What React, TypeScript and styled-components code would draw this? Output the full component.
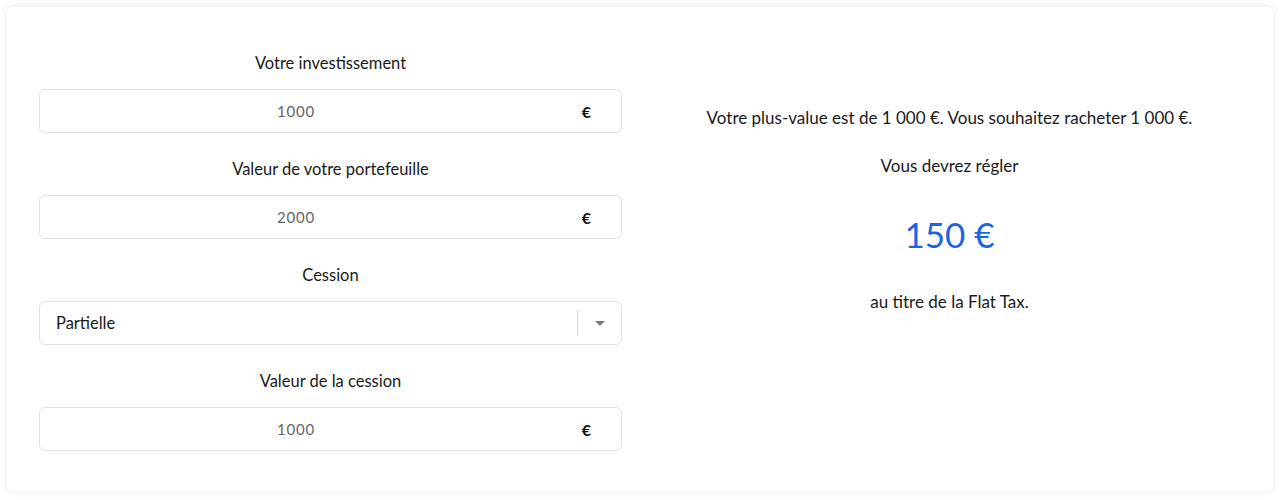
import React from 'react';
import styled, { createGlobalStyle } from 'styled-components';

const GlobalStyle = createGlobalStyle`
  body {
    margin: 0;
    background: #ffffff;
    font-family: Lato, "Liberation Sans", sans-serif;
    color: #1a1a1a;
  }
`;

const Page = styled.div`
  padding: 7px 9px 9px 7px;
`;

const Card = styled.div`
  display: grid;
  grid-template-columns: 1fr 1fr;
  column-gap: 36px;
  padding: 44px 32px 40px;
  background: #fff;
  border-radius: 6px;
  box-shadow: 0 0 8px rgba(0, 0, 0, 0.1);
`;

const Form = styled.div`
  display: flex;
  flex-direction: column;
  gap: 24px;
`;

const Field = styled.div`
  display: flex;
  flex-direction: column;
  gap: 14px;
`;

const Label = styled.label`
  text-align: center;
  font-size: 16.5px;
  line-height: 24px;
`;

const Box = styled.div`
  display: flex;
  align-items: center;
  height: 44px;
  box-sizing: border-box;
  border: 1px solid #e2e2e2;
  border-radius: 6px;
  background: #fff;
`;

const NumberInput = styled.input`
  flex: 1;
  min-width: 0;
  border: none;
  outline: none;
  background: transparent;
  text-align: center;
  font-family: inherit;
  font-size: 15px;
  letter-spacing: 0.8px;
  color: #666;
  padding: 0;
`;

const Addon = styled.span`
  width: 69px;
  text-align: center;
  font-weight: 700;
  font-size: 16px;
  color: #111;
`;

const SelectValue = styled.span`
  flex: 1;
  padding-left: 16px;
  font-size: 16.5px;
`;

const Separator = styled.span`
  width: 1px;
  height: 26px;
  background: #d6d6d6;
`;

const Caret = styled.span`
  width: 43px;
  display: flex;
  justify-content: center;
  &::after {
    content: '';
    border-left: 5px solid transparent;
    border-right: 5px solid transparent;
    border-top: 5px solid #7a7a7a;
  }
`;

const Result = styled.div`
  display: flex;
  flex-direction: column;
  align-items: center;
  padding-top: 55px;
  text-align: center;
  font-size: 17px;
  line-height: 24px;
`;

const Line = styled.p<{ $gap?: number }>`
  margin: 0 0 ${(p) => p.$gap ?? 24}px;
`;

const Amount = styled.p`
  margin: 0 0 34px;
  font-size: 35px;
  line-height: 44px;
  color: #1d63e3;
`;

interface NumberFieldProps {
  label: string;
  value: string;
}

const NumberField: React.FC<NumberFieldProps> = ({ label, value }) => (
  <Field>
    <Label>{label}</Label>
    <Box>
      <NumberInput type="text" defaultValue={value} />
      <Addon>€</Addon>
    </Box>
  </Field>
);

const App: React.FC = () => (
  <>
    <GlobalStyle />
    <Page>
      <Card>
        <Form>
          <NumberField label="Votre investissement" value="1000" />
          <NumberField label="Valeur de votre portefeuille" value="2000" />
          <Field>
            <Label>Cession</Label>
            <Box>
              <SelectValue>Partielle</SelectValue>
              <Separator />
              <Caret />
            </Box>
          </Field>
          <NumberField label="Valeur de la cession" value="1000" />
        </Form>
        <Result>
          <Line>Votre plus-value est de 1 000 €. Vous souhaitez racheter 1 000 €.</Line>
          <Line $gap={34}>Vous devrez régler</Line>
          <Amount>150 €</Amount>
          <Line $gap={0}>au titre de la Flat Tax.</Line>
        </Result>
      </Card>
    </Page>
  </>
);

export default App;
